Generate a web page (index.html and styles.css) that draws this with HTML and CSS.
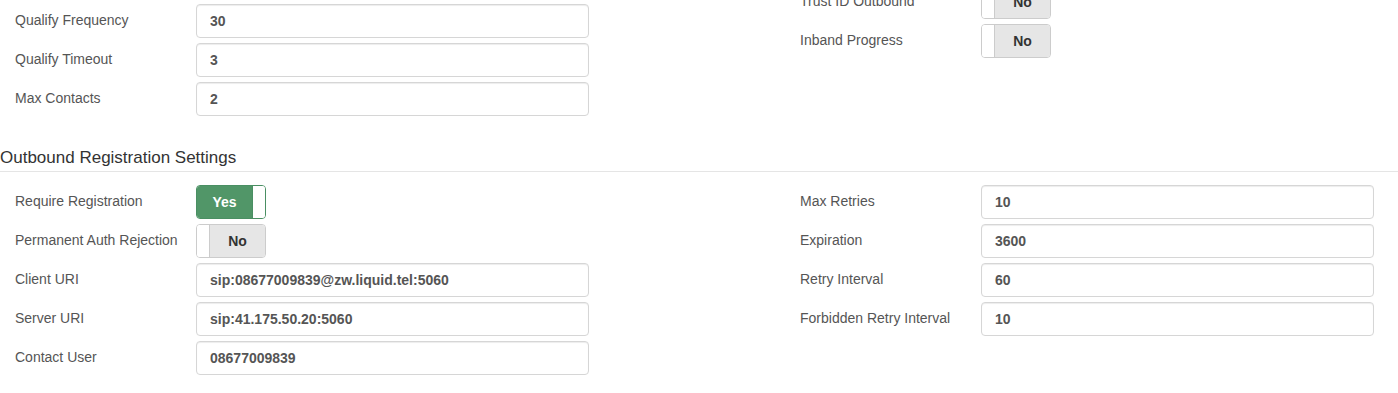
FILE: index.html
```html
<!DOCTYPE html>
<html>
<head>
<meta charset="utf-8">
<link rel="stylesheet" href="styles.css">
</head>
<body>
<div class="page">
  <div class="section top">
    <div class="col col-left-top">
      <div class="row"><label class="lbl">Qualify Frequency</label><input class="field" type="text" value="30" readonly></div>
      <div class="row"><label class="lbl">Qualify Timeout</label><input class="field" type="text" value="3" readonly></div>
      <div class="row"><label class="lbl">Max Contacts</label><input class="field" type="text" value="2" readonly></div>
    </div>
    <div class="col col-right-top">
      <div class="row"><label class="lbl">Trust ID Outbound</label><div class="toggle off"><span class="handle"></span><span class="state">No</span></div></div>
      <div class="row"><label class="lbl">Inband Progress</label><div class="toggle off"><span class="handle"></span><span class="state">No</span></div></div>
    </div>
  </div>

  <h4 class="legend">Outbound Registration Settings</h4>

  <div class="section">
    <div class="col">
      <div class="row"><label class="lbl">Require Registration</label><div class="toggle on"><span class="state">Yes</span><span class="handle"></span></div></div>
      <div class="row"><label class="lbl">Permanent Auth Rejection</label><div class="toggle off"><span class="handle"></span><span class="state">No</span></div></div>
      <div class="row"><label class="lbl">Client URI</label><input class="field" type="text" value="sip:08677009839@zw.liquid.tel:5060" readonly></div>
      <div class="row"><label class="lbl">Server URI</label><input class="field" type="text" value="sip:41.175.50.20:5060" readonly></div>
      <div class="row"><label class="lbl">Contact User</label><input class="field" type="text" value="08677009839" readonly></div>
    </div>
    <div class="col">
      <div class="row"><label class="lbl">Max Retries</label><input class="field" type="text" value="10" readonly></div>
      <div class="row"><label class="lbl">Expiration</label><input class="field" type="text" value="3600" readonly></div>
      <div class="row"><label class="lbl">Retry Interval</label><input class="field" type="text" value="60" readonly></div>
      <div class="row"><label class="lbl">Forbidden Retry Interval</label><input class="field" type="text" value="10" readonly></div>
    </div>
  </div>
</div>
</body>
</html>
```

FILE: styles.css
```css
html, body {
  margin: 0;
  padding: 0;
  background: #fff;
  overflow: hidden;
}

body {
  font-family: "Liberation Sans", Arial, sans-serif;
  font-size: 14px;
  line-height: 20px;
  color: #555;
}

.page {
  width: 100%;
  overflow: hidden;
}

.section {
  display: grid;
  grid-template-columns: 785px 785px;
}

.col {
  display: flex;
  flex-direction: column;
  gap: 5px;
}

.col-left-top {
  padding-top: 4px;
}

.col-right-top {
  margin-top: -15px;
}

.row {
  display: flex;
  align-items: flex-start;
  height: 34px;
}

.lbl {
  width: 181px;
  padding-left: 15px;
  padding-top: 6px;
  flex: none;
  color: #555;
  font-size: 14px;
  line-height: 20px;
}

.field {
  box-sizing: border-box;
  width: 393px;
  height: 34px;
  margin: 0;
  padding: 6px 12px 6px 13px;
  border: 1px solid #d6d6d6;
  border-radius: 4px;
  box-shadow: inset 0 1px 1px rgba(0, 0, 0, 0.075);
  font-family: "Liberation Sans", Arial, sans-serif;
  font-size: 14px;
  line-height: 20px;
  font-weight: bold;
  color: #555;
  background: #fff;
  outline: none;
}

.toggle {
  box-sizing: border-box;
  width: 70px;
  height: 34px;
  display: flex;
  border-radius: 4px;
  overflow: hidden;
  border: 1px solid #ccc;
  font-weight: bold;
  font-size: 14px;
}

.toggle .handle {
  width: 12px;
  flex: none;
  background: #fff;
}

.toggle .state {
  flex: 1;
  display: flex;
  align-items: center;
  justify-content: center;
}

.toggle.off .state {
  background: #e6e6e6;
  color: #333;
  border-left: 1px solid #ccc;
}

.toggle.on {
  border-color: #4a8f63;
}

.toggle.on .state {
  background: #519668;
  color: #fff;
}

.toggle.on .handle {
  border-left: 1px solid #4a8f63;
}

.legend {
  margin: 31px 0 13px 0;
  padding: 0 0 2px 0;
  font-size: 17px;
  line-height: 22px;
  font-weight: normal;
  color: #333;
  border-bottom: 1px solid #e5e5e5;
}
```
